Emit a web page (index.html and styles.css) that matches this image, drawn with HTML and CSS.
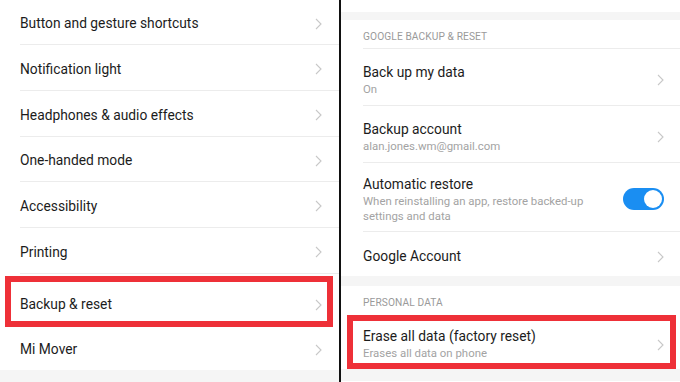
FILE: index.html
```html
<!DOCTYPE html>
<html>
<head>
<meta charset="utf-8">
<link rel="stylesheet" href="styles.css">
</head>
<body>
<div class="screen">
  <div class="panel left">
    <div class="row r45"><span class="title">Button and gesture shortcuts</span><svg class="chev" width="7" height="12" viewBox="0 0 7 12"><polyline points="1,1 6,6 1,11"/></svg></div>
    <div class="row r46"><span class="title">Notification light</span><svg class="chev" width="7" height="12" viewBox="0 0 7 12"><polyline points="1,1 6,6 1,11"/></svg></div>
    <div class="row r46"><span class="title">Headphones &amp; audio effects</span><svg class="chev" width="7" height="12" viewBox="0 0 7 12"><polyline points="1,1 6,6 1,11"/></svg></div>
    <div class="row r45"><span class="title">One-handed mode</span><svg class="chev" width="7" height="12" viewBox="0 0 7 12"><polyline points="1,1 6,6 1,11"/></svg></div>
    <div class="row r46"><span class="title">Accessibility</span><svg class="chev" width="7" height="12" viewBox="0 0 7 12"><polyline points="1,1 6,6 1,11"/></svg></div>
    <div class="row r46"><span class="title">Printing</span><svg class="chev" width="7" height="12" viewBox="0 0 7 12"><polyline points="1,1 6,6 1,11"/></svg></div>
    <div class="row r53 nosep hl-row"><span class="title">Backup &amp; reset</span><svg class="chev" width="7" height="12" viewBox="0 0 7 12"><polyline points="1,1 6,6 1,11"/></svg><div class="hl hl-left"></div></div>
    <div class="row r43 nosep"><span class="title">Mi Mover</span><svg class="chev" width="7" height="12" viewBox="0 0 7 12"><polyline points="1,1 6,6 1,11"/></svg></div>
    <div class="gap g12"></div>
  </div>
  <div class="divider"></div>
  <div class="panel right">
    <div class="topcut"></div>
    <div class="gap g8"></div>
    <div class="header h29 sep">GOOGLE BACKUP &amp; RESET</div>
    <div class="row r56">
      <div class="text"><div class="title">Back up my data</div><div class="sub">On</div></div>
      <svg class="chev" width="7" height="12" viewBox="0 0 7 12"><polyline points="1,1 6,6 1,11"/></svg>
    </div>
    <div class="row r56">
      <div class="text"><div class="title">Backup account</div><div class="sub">alan.jones.wm@gmail.com</div></div>
      <svg class="chev" width="7" height="12" viewBox="0 0 7 12"><polyline points="1,1 6,6 1,11"/></svg>
    </div>
    <div class="row r68">
      <div class="text"><div class="title">Automatic restore</div><div class="sub">When reinstalling an app, restore backed-up<br>settings and data</div></div>
      <div class="toggle"><div class="knob"></div></div>
    </div>
    <div class="row r44 nosep">
      <div class="text"><div class="title">Google Account</div></div>
      <svg class="chev" width="7" height="12" viewBox="0 0 7 12"><polyline points="1,1 6,6 1,11"/></svg>
    </div>
    <div class="gap g10"></div>
    <div class="header h29">PERSONAL DATA</div>
    <div class="row r54 nosep hl-row">
      <div class="text"><div class="title">Erase all data (factory reset)</div><div class="sub">Erases all data on phone</div></div>
      <svg class="chev" width="7" height="12" viewBox="0 0 7 12"><polyline points="1,1 6,6 1,11"/></svg>
      <div class="hl hl-right"></div>
    </div>
    <div class="gap g12"></div>
  </div>
</div>
</body>
</html>
```

FILE: styles.css
```css
* { box-sizing: border-box; }
html, body { margin: 0; padding: 0; background: #fff; }
body { font-family: Roboto, "Noto Sans", "Liberation Sans", sans-serif; color: #1f1f1f; }
.screen { display: flex; width: 680px; height: 382px; overflow: hidden; }
.panel { display: flex; flex-direction: column; background: #fff; }
.left { width: 339px; }
.right { width: 339px; }
.divider { width: 2px; background: #111; }
.row { position: relative; display: flex; align-items: center; justify-content: space-between; flex: none; }
.left .row { padding: 2px 17px 0 20px; }
.right .row { padding: 5px 16px 0 22px; }
.row::after { content: ""; position: absolute; bottom: 0; right: 0; height: 1px; background: #ececec; }
.left .row::after { left: 20px; }
.right .row::after { left: 22px; }
.row.nosep::after { display: none; }
.r43 { height: 43px; }
.r44 { height: 44px; }
.r45 { height: 45px; }
.r46 { height: 46px; }
.left .r53 { height: 53px; padding-top: 8px; }
.r54 { height: 54px; }
.r56 { height: 57px; }
.r68 { height: 69px; }
.title { font-size: 13.8px; line-height: 17px; color: #1c1c1c; white-space: nowrap; }
.sub { font-size: 11.4px; line-height: 15px; color: #a3a3a3; margin-top: 1px; white-space: nowrap; }
.chev { flex: none; }
.chev polyline { fill: none; stroke: #c8c8c8; stroke-width: 1.1; }
.gap { flex: none; background: #f5f5f5; }
.g8 { height: 8px; }
.g10 { height: 10px; }
.g12 { height: 12px; }
.topcut { height: 12px; flex: none; }
.header { position: relative; flex: none; display: flex; align-items: center; padding: 3px 0 0 22px; font-size: 10.2px; color: #9a9a9a; letter-spacing: 0.1px; }
.h29 { height: 29px; }
.header.sep::after { content: ""; position: absolute; left: 22px; right: 0; bottom: 0; height: 1px; background: #ececec; }
.toggle { flex: none; width: 41px; height: 22px; border-radius: 11px; background: #1a8ef2; position: relative; margin-top: -3px; }
.knob { position: absolute; right: 2px; top: 2px; width: 18px; height: 18px; border-radius: 50%; background: #fff; }
.hl { position: absolute; border: 6px solid #ee3038; pointer-events: none; }
.hl-left { left: 5px; right: 6px; top: 2px; bottom: 0; }
.hl-right { left: 6px; right: 4px; top: 0; bottom: 0; }
```
